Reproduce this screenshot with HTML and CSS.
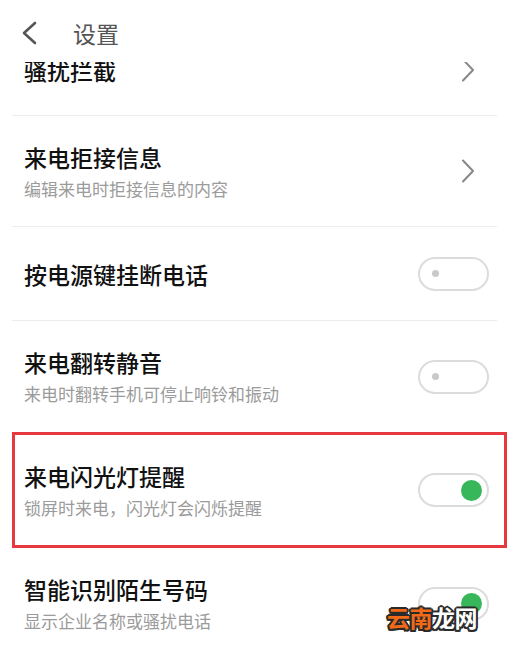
FILE: index.html
```html
<!DOCTYPE html>
<html lang="zh-CN">
<head>
  <meta charset="UTF-8" />
  <meta name="viewport" content="width=device-width, initial-scale=1.0"/>
  <title>设置</title>
  <link rel="stylesheet" href="styles.css">
</head>
<body>

  <!-- Top bar -->
  <header class="topbar">
    <svg class="back" width="16" height="24" viewBox="0 0 16 24">
      <polyline points="14,2 3,12 14,22" />
    </svg>
    <h1 class="title">设置</h1>
  </header>

  <!-- Settings list -->
  <main class="list">
    <div class="row row-cut">
      <div class="text">
        <div class="name">骚扰拦截</div>
      </div>
      <svg class="chevron" width="14" height="24" viewBox="0 0 14 24">
        <polyline points="2,1.5 12,12 2,22.5" />
      </svg>
    </div>

    <div class="row row-two">
      <div class="text">
        <div class="name">来电拒接信息</div>
        <div class="desc">编辑来电时拒接信息的内容</div>
      </div>
      <svg class="chevron" width="14" height="24" viewBox="0 0 14 24">
        <polyline points="2,1.5 12,12 2,22.5" />
      </svg>
    </div>

    <div class="row row-one">
      <div class="text">
        <div class="name">按电源键挂断电话</div>
      </div>
      <div class="switch"><span class="knob"></span></div>
    </div>

    <div class="row row-two no-line">
      <div class="text">
        <div class="name">来电翻转静音</div>
        <div class="desc">来电时翻转手机可停止响铃和振动</div>
      </div>
      <div class="switch"><span class="knob"></span></div>
    </div>

    <div class="highlight">
      <div class="row row-boxed">
        <div class="text">
          <div class="name">来电闪光灯提醒</div>
          <div class="desc">锁屏时来电，闪光灯会闪烁提醒</div>
        </div>
        <div class="switch on"><span class="knob"></span></div>
      </div>
    </div>

    <div class="row row-two no-line">
      <div class="text">
        <div class="name">智能识别陌生号码</div>
        <div class="desc">显示企业名称或骚扰电话</div>
      </div>
      <div class="switch on"><span class="knob"></span></div>
    </div>
  </main>

  <!-- Watermark -->
  <div class="watermark"><span class="wm-orange">云南</span><span class="wm-white">龙网</span></div>

</body>
</html>
```

FILE: styles.css
```css
* {
  margin: 0;
  padding: 0;
  box-sizing: border-box;
  font-family: "Noto Sans CJK SC", "Noto Sans", sans-serif;
}

body {
  width: 520px;
  height: 648px;
  overflow: hidden;
  background: #fff;
  position: relative;
}

/* Top bar */
.topbar {
  height: 62px;
  padding: 4px 0 0 21px;
  display: flex;
  align-items: center;
  gap: 36px;
  background: #fff;
}

.back polyline {
  fill: none;
  stroke: #555;
  stroke-width: 2.6;
  stroke-linecap: round;
  stroke-linejoin: round;
}

.title {
  font-size: 23px;
  line-height: 30px;
  font-weight: 400;
  color: #555;
}

/* List */
.list {
  height: 586px;
  margin: 0 13px 0 12px;
  overflow: hidden;
}

.row {
  display: flex;
  align-items: center;
  justify-content: space-between;
  margin-right: 10px;
  padding: 0 8px 0 12px;
  border-bottom: 1px solid #ececec;
}

.row-cut {
  height: 92px;
  margin-top: -38px;
}

.row-two {
  height: 113px;
}

.row-one {
  height: 94px;
}

.row-cut + .row-two {
  height: 111px;
}

.no-line {
  border-bottom: none;
}

.row-two.no-line {
  height: 111px;
}

.name {
  font-size: 23px;
  line-height: 30px;
  font-weight: 500;
  color: #111;
}

.desc {
  margin-top: 5px;
  font-size: 17px;
  line-height: 24px;
  color: #9b9b9b;
}

.chevron {
  margin-right: 14px;
}

.chevron polyline {
  fill: none;
  stroke: #888;
  stroke-width: 2;
  stroke-linecap: round;
  stroke-linejoin: round;
}

/* Highlighted row */
.highlight {
  height: 116px;
  border: 3px solid #e6393f;
}

.row-boxed {
  height: 110px;
  margin-right: 0;
  padding: 0 15px 0 9px;
  border-bottom: none;
}

/* Switch */
.switch {
  width: 71px;
  height: 34px;
  border: 2px solid #dcdcdc;
  border-radius: 17px;
  background: #fff;
  display: flex;
  align-items: center;
  padding-left: 12px;
}

.switch .knob {
  width: 7px;
  height: 7px;
  border-radius: 50%;
  background: #c9c9c9;
}

.switch.on {
  justify-content: flex-end;
  padding: 0 5px 0 0;
}

.switch.on .knob {
  width: 21px;
  height: 21px;
  background: #37b75a;
}

/* Watermark */
.watermark {
  position: absolute;
  left: 387px;
  top: 603px;
  font-size: 23px;
  line-height: 28px;
  font-weight: 700;
  letter-spacing: -0.5px;
}

.wm-orange,
.wm-white {
  text-shadow:
    -1.5px -1.5px 0 #2a2a2a, 1.5px -1.5px 0 #2a2a2a,
    -1.5px 1.5px 0 #2a2a2a, 1.5px 1.5px 0 #2a2a2a,
    0 -2px 0 #2a2a2a, 0 2px 0 #2a2a2a,
    -2px 0 0 #2a2a2a, 2px 0 0 #2a2a2a;
}

.wm-orange {
  color: #f06a18;
}

.wm-white {
  color: #fff;
}
```
